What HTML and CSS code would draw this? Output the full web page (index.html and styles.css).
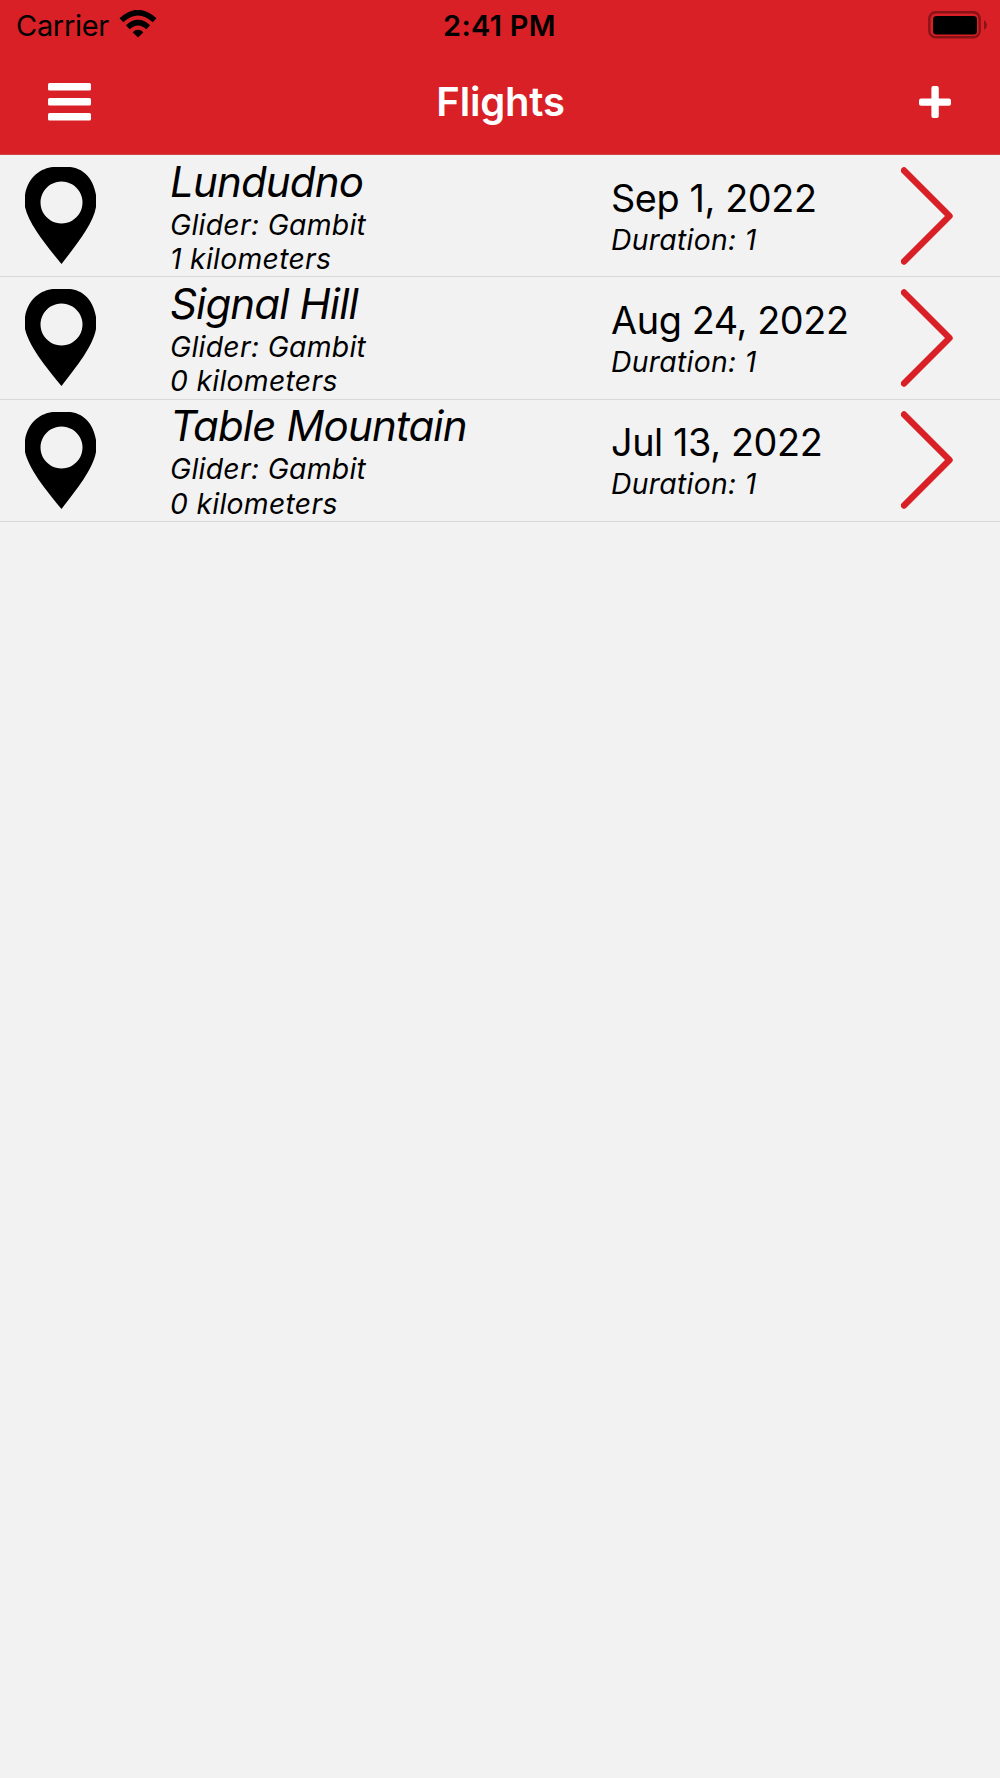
FILE: index.html
```html
<!DOCTYPE html>
<html lang="en">
<head>
    <meta charset="UTF-8">
    <title>Flights</title>
    <link rel="stylesheet" href="styles.css">
</head>
<body>
    <header>
        <!-- Status bar -->
        <div class="status-bar">
            <div class="carrier">
                <span class="carrier-name">Carrier</span>
                <svg class="wifi" viewBox="0 0 38 28">
                    <path d="M19 27.5 L13.6 22.2 Q19 17.3 24.4 22.2 Z"/>
                    <path d="M8.8 17.3 Q19 8 29.2 17.3" fill="none" stroke="#000" stroke-width="5.4"/>
                    <path d="M2.4 10.2 Q19 -5 35.6 10.2" fill="none" stroke="#000" stroke-width="5.4"/>
                </svg>
            </div>
            <span class="time">2:41 PM</span>
            <svg class="battery" viewBox="0 0 60 28">
                <rect x="1.3" y="1.3" width="50.4" height="25" rx="6.5" fill="none" stroke="#8a1318" stroke-width="2.4"/>
                <rect x="5" y="5" width="44" height="18.5" rx="3.5"/>
                <path d="M56 9 Q59 11 59 14 Q59 17 56 19 Z" fill="#8a1318"/>
            </svg>
        </div>
        <!-- Navigation bar -->
        <nav class="nav-bar">
            <svg class="menu" viewBox="0 0 43 38">
                <rect width="43" height="7.6" y="0" rx="1.5"/>
                <rect width="43" height="7.6" y="15" rx="1.5"/>
                <rect width="43" height="7.6" y="30" rx="1.5"/>
            </svg>
            <h1>Flights</h1>
            <svg class="add" viewBox="0 0 32 32">
                <rect x="12.4" width="7.4" height="32" rx="2"/>
                <rect y="12.4" width="32" height="7.4" rx="2"/>
            </svg>
        </nav>
    </header>

    <!-- Shared row icons -->
    <svg class="symbols">
        <symbol id="pin" viewBox="0 0 71 97">
            <path fill-rule="evenodd" d="M28 0 H45 C56 1 68 9 71 28 V40 C68 57 52 77 36.5 97 C20 77 4 57 0 40 V28 C3 9 17 1 28 0 Z M36.5 14.5 a21 21 0 1 0 0.01 0 Z"/>
        </symbol>
        <symbol id="arrow" viewBox="0 0 52 98">
            <path d="M3 3.5 L48.5 49 L3 94.5" fill="none" stroke="#d82026" stroke-width="6.4" stroke-linecap="round" stroke-linejoin="round"/>
        </symbol>
    </svg>

    <ul class="flight-list">
        <li class="flight">
            <svg class="pin"><use href="#pin"/></svg>
            <div class="site">
                <p class="name">Lundudno</p>
                <p class="detail">Glider: Gambit</p>
                <p class="detail">1 kilometers</p>
            </div>
            <div class="when">
                <p class="date">Sep 1, 2022</p>
                <p class="detail">Duration: 1</p>
            </div>
            <svg class="arrow"><use href="#arrow"/></svg>
        </li>
        <li class="flight">
            <svg class="pin"><use href="#pin"/></svg>
            <div class="site">
                <p class="name">Signal Hill</p>
                <p class="detail">Glider: Gambit</p>
                <p class="detail">0 kilometers</p>
            </div>
            <div class="when">
                <p class="date">Aug 24, 2022</p>
                <p class="detail">Duration: 1</p>
            </div>
            <svg class="arrow"><use href="#arrow"/></svg>
        </li>
        <li class="flight">
            <svg class="pin"><use href="#pin"/></svg>
            <div class="site">
                <p class="name">Table Mountain</p>
                <p class="detail">Glider: Gambit</p>
                <p class="detail">0 kilometers</p>
            </div>
            <div class="when">
                <p class="date">Jul 13, 2022</p>
                <p class="detail">Duration: 1</p>
            </div>
            <svg class="arrow"><use href="#arrow"/></svg>
        </li>
    </ul>
</body>
</html>
```
FILE: styles.css
```css
* {
    box-sizing: border-box;
}
body {
    font-family: Inter, "Liberation Sans", sans-serif;
    background-color: #f2f2f2;
    color: #000;
    margin: 0;
}
h1, p, ul {
    margin: 0;
    padding: 0;
    font-weight: normal;
}
header {
    height: 155px;
    background-color: #d82026;
    border-bottom: 1px solid #d0454a;
}
.status-bar,
.nav-bar {
    display: grid;
    grid-template-columns: 1fr auto 1fr;
    align-items: center;
}
.status-bar {
    height: 50px;
    padding: 0 12px 0 16px;
    font-size: 29px;
}
.carrier {
    display: flex;
    align-items: center;
    gap: 10px;
}
.carrier-name {
    letter-spacing: -0.3px;
}
.wifi {
    width: 38px;
    height: 28px;
    margin-bottom: 2px;
}
.time {
    font-weight: 600;
    letter-spacing: 0.3px;
    margin-right: 5px;
}
.battery {
    width: 60px;
    height: 28px;
    margin-bottom: 1px;
    justify-self: end;
}
.nav-bar {
    height: 104px;
    padding: 0 49px 0 48px;
    fill: #fff;
}
.nav-bar h1 {
    color: #fff;
    font-size: 40px;
    font-weight: 600;
    letter-spacing: -0.2px;
    padding: 0 0 2px 2px;
}
.menu {
    width: 43px;
    height: 38px;
}
.add {
    width: 32px;
    height: 32px;
    justify-self: end;
}
.symbols {
    display: none;
}
.flight-list {
    list-style-type: none;
}
.flight {
    display: grid;
    grid-template-columns: 145px 441px 290px 52px;
    grid-template-rows: 100%;
    align-items: center;
    height: 122.3px;
    padding-left: 25px;
    border-bottom: 1px solid #d8d8d8;
}
.pin {
    width: 71px;
    height: 97px;
}
.arrow {
    width: 52px;
    height: 98px;
}
.site,
.when {
    padding-top: 1px;
}
.name {
    font-size: 42px;
    font-style: italic;
    line-height: 51px;
    letter-spacing: -0.85px;
    margin-bottom: 1px;
}
.detail {
    font-size: 28.3px;
    font-style: italic;
    line-height: 34.6px;
    letter-spacing: 0.3px;
}
.date {
    font-size: 37.8px;
    line-height: 46px;
    letter-spacing: -0.4px;
    margin-bottom: 2px;
}
```
